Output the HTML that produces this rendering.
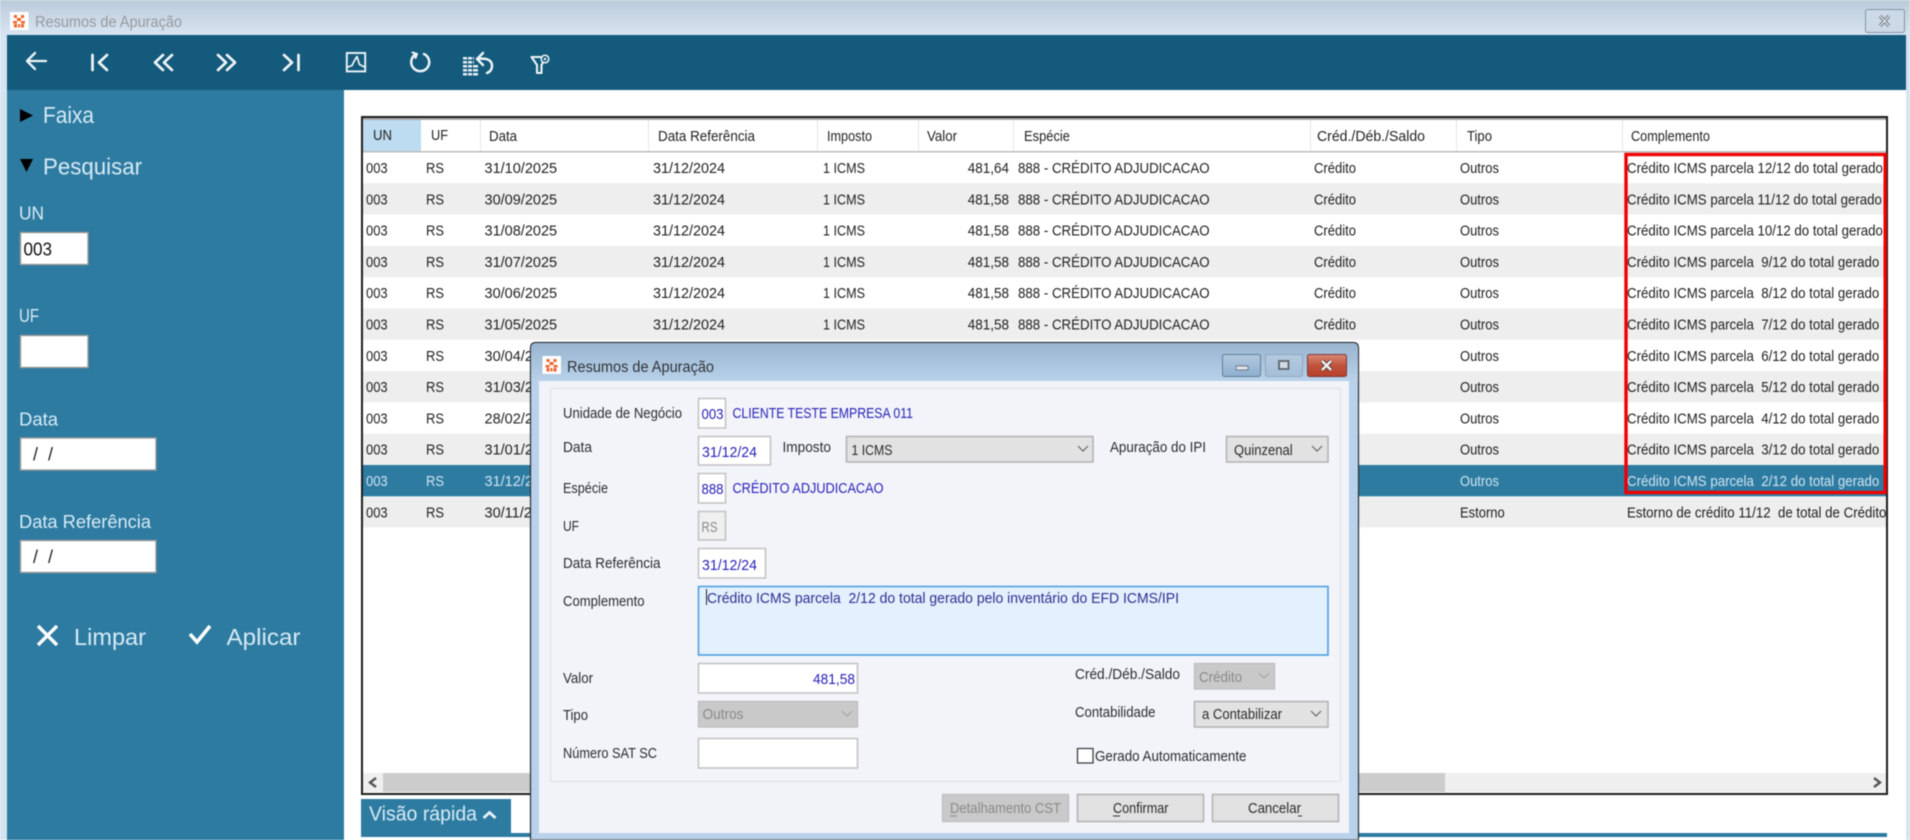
<!DOCTYPE html>
<html lang="pt-BR"><head><meta charset="utf-8"><title>Resumos de Apuração</title>
<style>
html,body{margin:0;padding:0;width:1910px;height:840px;overflow:hidden;background:#fff}
svg{display:block;filter:blur(.4px)}
text{font-family:"Liberation Sans",sans-serif;white-space:pre}
.g text{font-size:15px;fill:#222}
.g text.s{fill:#cfe4ef}
.h text{font-size:15px;fill:#222}
.sb text{fill:#d6ebf5}
.d text{font-size:15px;fill:#2c2c2c}
.d text.b{fill:#2a22b8}
.d text.m{fill:#8a8a8a}
.ic{fill:none;stroke:#eef4f7;stroke-linecap:round;stroke-linejoin:round}
.inp{fill:#fff;stroke:#c4c4c4;stroke-width:1.6}
.sel{fill:#e2e2e2;stroke:#b5b5b5;stroke-width:1.6}
.dis{fill:#c9c9c9;stroke:#c0c0c0;stroke-width:1.4}
.ch{fill:none;stroke:#666;stroke-width:1.2}
.btn{fill:#e1e1e1;stroke:#b4b4b4;stroke-width:1.6}
</style></head><body>
<svg width="1910" height="840" viewBox="0 0 1910 840" xmlns="http://www.w3.org/2000/svg">
<defs>
<linearGradient id="tb" x1="0" y1="0" x2="0" y2="1"><stop offset="0" stop-color="#bccbda"/><stop offset="1" stop-color="#d8e5f2"/></linearGradient>
<linearGradient id="dt" x1="0" y1="0" x2="0" y2="1"><stop offset="0" stop-color="#99b4cf"/><stop offset="1" stop-color="#b9d2ea"/></linearGradient>
<linearGradient id="bb" x1="0" y1="0" x2="0" y2="1"><stop offset="0" stop-color="#b3c9de"/><stop offset="1" stop-color="#8dafcf"/></linearGradient>
<linearGradient id="bm" x1="0" y1="0" x2="0" y2="1"><stop offset="0" stop-color="#b4cadf"/><stop offset="1" stop-color="#a5bfd9"/></linearGradient>
<linearGradient id="bx" x1="0" y1="0" x2="0" y2="1"><stop offset="0" stop-color="#d88a78"/><stop offset=".5" stop-color="#c1533c"/><stop offset="1" stop-color="#b8402a"/></linearGradient>
<clipPath id="gc"><rect x="363" y="118" width="1523" height="655"/></clipPath>
</defs>

<!-- outer window -->
<rect width="1910" height="840" fill="#d6e4f1"/>
<rect width="1910" height="36" fill="url(#tb)"/>
<rect x="10" y="12" width="18.5" height="18" fill="#fff"/>
<g fill="#f0642a"><rect x="14" y="15" width="3" height="3"/><rect x="21" y="15" width="3" height="3"/><rect x="17" y="18" width="4" height="3"/><rect x="13" y="21" width="4" height="2.5"/><rect x="21" y="21" width="4" height="2.5"/><rect x="14" y="24" width="3" height="3.5"/><rect x="18" y="24" width="2" height="3.5"/><rect x="21" y="24" width="3" height="3.5"/></g>
<text x="35" y="27" font-size="15.5" fill="#96999e" textLength="147" lengthAdjust="spacingAndGlyphs">Resumos de Apuração</text>
<rect x="1865.5" y="9.5" width="39" height="23" rx="2" fill="#ccd9e6" stroke="#8396a8"/>
<path d="M1880 16l9 10M1889 16l-9 10" stroke="#6b7680" stroke-width="3.2" fill="none"/>
<path d="M1880 16l9 10M1889 16l-9 10" stroke="#f2f5f8" stroke-width="1.2" fill="none"/>

<!-- toolbar -->
<rect x="7" y="35" width="1899" height="55" fill="#145a7c"/>
<g class="ic" style="stroke-width:2.7">
<path style="stroke-width:2.3" d="M27 61H46M35 53l-8 8 8 8"/>
<path d="M92.500 55V70M107 55l-8 7.500 8 7.500"/>
<path d="M163 55l-8 7.500 8 7.500M172 55l-8 7.500 8 7.500"/>
<path d="M218 55l8 7.500-8 7.500M227 55l8 7.500-8 7.500"/>
<path d="M284 55l8 7.500-8 7.500M298.500 55V70"/>
</g>
<g class="ic">
<rect x="346.800" y="53" width="18.400" height="18.400" style="stroke-width:1.900;stroke-linecap:butt;stroke-linejoin:miter"/>
<path d="M348 67l4-1.500 2.500-5 2.500-4 2.500 8 5 2.500" style="stroke-width:1.700"/>
<path d="M415.500 54.500A9 9 0 1 0 424 54" style="stroke-width:2.500"/>
<path d="M412.500 52.500l4.500 1.500-1.500 4" style="stroke-width:2"/>
<path d="M477 59Q492 57 492 66Q492 71 487 73M483 53l-6 6 6 6" style="stroke-width:2.500"/>
<path d="M531.500 57H546L541.500 65V73H537V65Z" style="stroke-width:2.100"/>
<circle cx="545" cy="59" r="3.800" style="stroke-width:1.500;fill:#145a7c"/>
</g>
<g fill="#e6eef3"><rect x="463" y="57" width="11" height="2.500"/><rect x="463" y="61" width="11" height="2.500"/><rect x="463" y="65" width="15" height="2.500"/><rect x="463" y="69" width="15" height="2.500"/><rect x="463" y="73" width="15" height="2.500"/></g>
<g fill="#145a7c"><rect x="467" y="56" width="1" height="20"/><rect x="472" y="56" width="1" height="20"/></g>
<circle cx="545" cy="59" r="1.300" fill="#e6eef3"/>

<!-- sidebar -->
<rect x="7" y="90" width="337" height="750" fill="#2e7ba2"/>
<path d="M20 109L33 115.500 20 122Z" fill="#000"/>
<path d="M20 159H33L26.500 172Z" fill="#000"/>
<g class="sb">
<text x="43" y="123" font-size="23" textLength="51" lengthAdjust="spacingAndGlyphs">Faixa</text>
<text x="43" y="174.500" font-size="23" textLength="99" lengthAdjust="spacingAndGlyphs">Pesquisar</text>
<text x="19" y="219.700" font-size="18.500" textLength="25" lengthAdjust="spacingAndGlyphs">UN</text>
<text x="19" y="322" font-size="18.500" textLength="20" lengthAdjust="spacingAndGlyphs">UF</text>
<text x="19" y="425.700" font-size="18.500" textLength="39" lengthAdjust="spacingAndGlyphs">Data</text>
<text x="19" y="528" font-size="18.500" textLength="132" lengthAdjust="spacingAndGlyphs">Data Referência</text>
<text x="74" y="645" font-size="23" textLength="72" lengthAdjust="spacingAndGlyphs">Limpar</text>
<text x="226.500" y="645" font-size="23" textLength="74" lengthAdjust="spacingAndGlyphs">Aplicar</text>
</g>
<g fill="#fff" stroke="#9a9a9a" stroke-width="1.400">
<rect x="20.500" y="232.500" width="67.500" height="32"/>
<rect x="20.500" y="335.500" width="67.500" height="32"/>
<rect x="20.500" y="438" width="135.500" height="32"/>
<rect x="20.500" y="540.500" width="135.500" height="32"/>
</g>
<text x="23.500" y="255.500" font-size="18.500" fill="#111" textLength="28.500" lengthAdjust="spacingAndGlyphs">003</text>
<text x="33" y="460.500" font-size="18" fill="#222">/  /</text>
<text x="33" y="563" font-size="18" fill="#222">/  /</text>
<path d="M38 626L57 645M57 626L38 645" stroke="#fff" stroke-width="3.400" fill="none"/>
<path d="M190 634L197 642 210 626" stroke="#fff" stroke-width="3.600" fill="none"/>

<!-- content -->
<rect x="344" y="90" width="1562" height="750" fill="#fff"/>

<!-- grid -->
<rect x="362" y="117" width="1525" height="677" fill="#fff" stroke="#1c1c1c" stroke-width="2"/>
<rect x="363" y="118" width="1523" height="2" fill="#aaa"/>
<rect x="363" y="120" width="58" height="31" fill="#bddcf1"/>
<rect x="363" y="151" width="1523" height="1.500" fill="#bdbdbd"/>
<g fill="#e6e6e6"><rect x="480" y="120" width="1" height="31"/><rect x="648" y="120" width="1" height="31"/><rect x="817" y="120" width="1" height="31"/><rect x="918" y="120" width="1" height="31"/><rect x="1013" y="120" width="1" height="31"/><rect x="1310" y="120" width="1" height="31"/><rect x="1456" y="120" width="1" height="31"/><rect x="1622" y="120" width="1" height="31"/></g>
<g fill="#eeeeee"><rect x="363" y="183.300" width="1523" height="31.300"/><rect x="363" y="245.900" width="1523" height="31.300"/><rect x="363" y="308.500" width="1523" height="31.300"/><rect x="363" y="371.100" width="1523" height="31.300"/><rect x="363" y="433.700" width="1523" height="31.300"/><rect x="363" y="496.300" width="1523" height="31"/></g>
<rect x="363" y="465" width="1523" height="31.300" fill="#2e7ba2"/>

<g class="h">
<text x="373" y="140" textLength="19" lengthAdjust="spacingAndGlyphs">UN</text>
<text x="431" y="140" textLength="17" lengthAdjust="spacingAndGlyphs">UF</text>
<text x="489" y="141" textLength="28" lengthAdjust="spacingAndGlyphs">Data</text>
<text x="658" y="141" textLength="97" lengthAdjust="spacingAndGlyphs">Data Referência</text>
<text x="827" y="141" textLength="45" lengthAdjust="spacingAndGlyphs">Imposto</text>
<text x="927" y="141" textLength="30" lengthAdjust="spacingAndGlyphs">Valor</text>
<text x="1024" y="141" textLength="46" lengthAdjust="spacingAndGlyphs">Espécie</text>
<text x="1317" y="141" textLength="108" lengthAdjust="spacingAndGlyphs">Créd./Déb./Saldo</text>
<text x="1467" y="141" textLength="25" lengthAdjust="spacingAndGlyphs">Tipo</text>
<text x="1631" y="141" textLength="79" lengthAdjust="spacingAndGlyphs">Complemento</text>
</g>

<g class="g" clip-path="url(#gc)">
<g transform="translate(366 0) scale(.864 1)">
<text y="173">003</text><text y="204.300">003</text><text y="235.600">003</text><text y="266.900">003</text><text y="298.200">003</text><text y="329.500">003</text><text y="360.800">003</text><text y="392.100">003</text><text y="423.400">003</text><text y="454.700">003</text><text y="486" class="s">003</text><text y="517.300">003</text>
</g>
<g transform="translate(426 0) scale(.865 1)">
<text y="173">RS</text><text y="204.300">RS</text><text y="235.600">RS</text><text y="266.900">RS</text><text y="298.200">RS</text><text y="329.500">RS</text><text y="360.800">RS</text><text y="392.100">RS</text><text y="423.400">RS</text><text y="454.700">RS</text><text y="486" class="s">RS</text><text y="517.300">RS</text>
</g>
<g transform="translate(484.500 0) scale(.968 1)">
<text y="173">31/10/2025</text><text y="204.300">30/09/2025</text><text y="235.600">31/08/2025</text><text y="266.900">31/07/2025</text><text y="298.200">30/06/2025</text><text y="329.500">31/05/2025</text><text y="360.800">30/04/2025</text><text y="392.100">31/03/2025</text><text y="423.400">28/02/2025</text><text y="454.700">31/01/2025</text><text y="486" class="s">31/12/2024</text><text y="517.300">30/11/2024</text>
</g>
<g transform="translate(653 0) scale(.96 1)">
<text y="173">31/12/2024</text><text y="204.300">31/12/2024</text><text y="235.600">31/12/2024</text><text y="266.900">31/12/2024</text><text y="298.200">31/12/2024</text><text y="329.500">31/12/2024</text>
</g>
<g transform="translate(823 0) scale(.84 1)">
<text y="173">1 ICMS</text><text y="204.300">1 ICMS</text><text y="235.600">1 ICMS</text><text y="266.900">1 ICMS</text><text y="298.200">1 ICMS</text><text y="329.500">1 ICMS</text>
</g>
<g transform="translate(1009 0) scale(.9 1)" text-anchor="end">
<text y="173">481,64</text><text y="204.300">481,58</text><text y="235.600">481,58</text><text y="266.900">481,58</text><text y="298.200">481,58</text><text y="329.500">481,58</text>
</g>
<g transform="translate(1018 0) scale(.886 1)">
<text y="173">888 - CRÉDITO ADJUDICACAO</text><text y="204.300">888 - CRÉDITO ADJUDICACAO</text><text y="235.600">888 - CRÉDITO ADJUDICACAO</text><text y="266.900">888 - CRÉDITO ADJUDICACAO</text><text y="298.200">888 - CRÉDITO ADJUDICACAO</text><text y="329.500">888 - CRÉDITO ADJUDICACAO</text>
</g>
<g transform="translate(1314 0) scale(.87 1)">
<text y="173">Crédito</text><text y="204.300">Crédito</text><text y="235.600">Crédito</text><text y="266.900">Crédito</text><text y="298.200">Crédito</text><text y="329.500">Crédito</text>
</g>
<g transform="translate(1460 0) scale(.866 1)">
<text y="173">Outros</text><text y="204.300">Outros</text><text y="235.600">Outros</text><text y="266.900">Outros</text><text y="298.200">Outros</text><text y="329.500">Outros</text><text y="360.800">Outros</text><text y="392.100">Outros</text><text y="423.400">Outros</text><text y="454.700">Outros</text><text y="486" class="s">Outros</text><text y="517.300">Estorno</text>
</g>
<g transform="translate(1627 0) scale(.885 1)">
<text y="173">Crédito ICMS parcela 12/12 do total gerado</text><text y="204.300">Crédito ICMS parcela 11/12 do total gerado</text><text y="235.600">Crédito ICMS parcela 10/12 do total gerado</text><text y="266.900">Crédito ICMS parcela  9/12 do total gerado</text><text y="298.200">Crédito ICMS parcela  8/12 do total gerado</text><text y="329.500">Crédito ICMS parcela  7/12 do total gerado</text><text y="360.800">Crédito ICMS parcela  6/12 do total gerado</text><text y="392.100">Crédito ICMS parcela  5/12 do total gerado</text><text y="423.400">Crédito ICMS parcela  4/12 do total gerado</text><text y="454.700">Crédito ICMS parcela  3/12 do total gerado</text><text y="486" class="s">Crédito ICMS parcela  2/12 do total gerado</text><text y="517.300">Estorno de crédito 11/12  de total de Crédito gerado</text>
</g>
</g>

<!-- red highlight -->
<rect x="1626" y="154.500" width="259.200" height="338" fill="none" stroke="#f00000" stroke-width="3.400"/>

<!-- scrollbar -->
<rect x="363" y="773" width="1523" height="19" fill="#efefef"/>
<rect x="383" y="773" width="1062" height="19" fill="#cccccc"/>
<path d="M376 778l-6 4.500 6 4.500" fill="none" stroke="#555" stroke-width="2.400"/>
<path d="M1874 778l6 4.500-6 4.500" fill="none" stroke="#555" stroke-width="2.400"/>

<!-- visão rápida -->
<rect x="361" y="799" width="150" height="37" fill="#2e7ba2"/>
<rect x="361" y="833" width="1526" height="4" fill="#2e7ba2"/>
<text x="369" y="820.700" font-size="20" fill="#d6ebf5" textLength="108" lengthAdjust="spacingAndGlyphs">Visão rápida</text>
<path d="M483.500 818L489.500 812.500 495.500 818" fill="none" stroke="#eaf4f8" stroke-width="2.800"/>

<!-- dialog -->
<g class="d">
<path d="M530.500 840V348Q530.500 342.500 536 342.500H1353Q1358.500 342.500 1358.500 348V840Z" fill="#b9d1ea" stroke="#2a2f33" stroke-width="1.200"/>
<path d="M531 381V348Q531 343 536 343H1353Q1358 343 1358 348V381Z" fill="url(#dt)"/>
<rect x="539" y="381" width="810" height="452" fill="#f1f3f9"/>
<rect x="550.500" y="388.500" width="790" height="393" fill="#f2f4fa" stroke="#e2e4e8" stroke-width="1.400"/>

<rect x="542.500" y="356" width="18.500" height="18" fill="#fff"/>
<g fill="#f0642a"><rect x="546.500" y="359" width="3" height="3"/><rect x="553.500" y="359" width="3" height="3"/><rect x="549.500" y="362" width="4" height="3"/><rect x="545.500" y="365" width="4" height="2.500"/><rect x="553.500" y="365" width="4" height="2.500"/><rect x="546.500" y="368" width="3" height="3.500"/><rect x="550.500" y="368" width="2" height="3.500"/><rect x="553.500" y="368" width="3" height="3.500"/></g>
<text x="567" y="372" style="font-size:15.500px;fill:#2f3338" textLength="147" lengthAdjust="spacingAndGlyphs">Resumos de Apuração</text>

<rect x="1222.500" y="354.500" width="38" height="22" rx="2" fill="url(#bb)" stroke="#5f7d98"/>
<rect x="1236" y="366" width="12" height="4" fill="#dfe4e8" stroke="#5a6670" stroke-width=".8"/>
<rect x="1265.500" y="354.500" width="37" height="22" rx="2" fill="url(#bm)" stroke="#8fa9c0"/>
<rect x="1279" y="361" width="9.500" height="8" fill="#d5dbe0" stroke="#5a6670" stroke-width="1.800"/>
<rect x="1307.500" y="354.500" width="39" height="22" rx="2" fill="url(#bx)" stroke="#7b3a3a"/>
<path d="M1322 361l9 9M1331 361l-9 9" stroke="#4c3a3a" stroke-width="4.400" fill="none"/>
<path d="M1322 361l9 9M1331 361l-9 9" stroke="#f0f0f0" stroke-width="2.600" fill="none"/>

<rect class="inp" x="698.500" y="398.500" width="27" height="29.500"/>
<rect class="inp" x="698.500" y="436.500" width="72" height="28.500"/>
<rect class="sel" x="846.500" y="436.500" width="246.500" height="25.500"/>
<rect class="sel" x="1226.500" y="436.500" width="101.500" height="25.500"/>
<rect class="inp" x="698.500" y="473.500" width="27" height="29.500"/>
<rect x="698.500" y="511.500" width="27" height="28.500" fill="#f0f0f0" stroke="#c4c4c4" stroke-width="1.600"/>
<rect class="inp" x="698.500" y="548.500" width="67" height="29.500"/>
<rect x="698.500" y="586.500" width="629.500" height="68.500" fill="#e3f0fd" stroke="#4fa0df" stroke-width="1.600"/>
<rect class="inp" x="698.500" y="663.500" width="159" height="29.500"/>
<rect class="dis" x="698.500" y="701.500" width="159" height="25.500"/>
<rect class="inp" x="698.500" y="738.500" width="159" height="29.500"/>
<rect class="dis" x="1194.500" y="663.500" width="80" height="25.500"/>
<rect class="sel" x="1194.500" y="701.500" width="133.500" height="25.500"/>
<rect x="1077.500" y="748.500" width="15.500" height="14.500" fill="#fff" stroke="#333" stroke-width="1.200"/>

<path class="ch" d="M1078 446l5 5 5-5"/>
<path class="ch" d="M1312 446l5 5 5-5"/>
<path class="ch" style="stroke:#a5a5a5" d="M842 711l5 5 5-5"/>
<path class="ch" style="stroke:#a5a5a5" d="M1259 673l5 5 5-5"/>
<path class="ch" d="M1311 711l5 5 5-5"/>

<text x="563" y="418" textLength="119" lengthAdjust="spacingAndGlyphs">Unidade de Negócio</text>
<text x="701.500" y="419" class="b" textLength="22" lengthAdjust="spacingAndGlyphs">003</text>
<text x="732.500" y="418" class="b" textLength="180.500" lengthAdjust="spacingAndGlyphs">CLIENTE TESTE EMPRESA 011</text>
<text x="563" y="452" textLength="29" lengthAdjust="spacingAndGlyphs">Data</text>
<text x="702" y="457" class="b" textLength="55" lengthAdjust="spacingAndGlyphs">31/12/24</text>
<text x="782.500" y="452" textLength="48.500" lengthAdjust="spacingAndGlyphs">Imposto</text>
<text x="851.500" y="455" textLength="41" lengthAdjust="spacingAndGlyphs">1 ICMS</text>
<text x="1110" y="452" textLength="96" lengthAdjust="spacingAndGlyphs">Apuração do IPI</text>
<text x="1234" y="455" textLength="58.700" lengthAdjust="spacingAndGlyphs">Quinzenal</text>
<text x="563" y="493" textLength="45" lengthAdjust="spacingAndGlyphs">Espécie</text>
<text x="701.500" y="494" class="b" textLength="22" lengthAdjust="spacingAndGlyphs">888</text>
<text x="732.500" y="493" class="b" textLength="151" lengthAdjust="spacingAndGlyphs">CRÉDITO ADJUDICACAO</text>
<text x="563" y="531" textLength="16" lengthAdjust="spacingAndGlyphs">UF</text>
<text x="701.500" y="532" class="m" textLength="16" lengthAdjust="spacingAndGlyphs">RS</text>
<text x="563" y="568" textLength="97.500" lengthAdjust="spacingAndGlyphs">Data Referência</text>
<text x="702" y="570" class="b" textLength="55" lengthAdjust="spacingAndGlyphs">31/12/24</text>
<text x="563" y="606" textLength="81.500" lengthAdjust="spacingAndGlyphs">Complemento</text>
<text x="707" y="603" class="b" style="fill:#2f2f8f" textLength="472" lengthAdjust="spacingAndGlyphs">Crédito ICMS parcela  2/12 do total gerado pelo inventário do EFD ICMS/IPI</text>
<rect x="706" y="589" width="1" height="16" fill="#222"/>
<text x="563" y="683" textLength="30" lengthAdjust="spacingAndGlyphs">Valor</text>
<text x="813" y="684" class="b" textLength="42" lengthAdjust="spacingAndGlyphs">481,58</text>
<text x="563" y="720" textLength="25" lengthAdjust="spacingAndGlyphs">Tipo</text>
<text x="702.500" y="719" class="m" textLength="41" lengthAdjust="spacingAndGlyphs">Outros</text>
<text x="563" y="758" textLength="94" lengthAdjust="spacingAndGlyphs">Número SAT SC</text>
<text x="1075" y="679" textLength="105" lengthAdjust="spacingAndGlyphs">Créd./Déb./Saldo</text>
<text x="1199" y="682" class="m" textLength="43" lengthAdjust="spacingAndGlyphs">Crédito</text>
<text x="1075" y="717" textLength="80.500" lengthAdjust="spacingAndGlyphs">Contabilidade</text>
<text x="1202" y="719" textLength="80" lengthAdjust="spacingAndGlyphs">a Contabilizar</text>
<text x="1095" y="761" textLength="151.500" lengthAdjust="spacingAndGlyphs">Gerado Automaticamente</text>

<rect class="dis" x="942.500" y="794.500" width="126" height="27"/>
<rect class="btn" x="1077.500" y="794.500" width="126" height="27"/>
<rect class="btn" x="1212.500" y="794.500" width="126" height="27"/>
<text x="950" y="813" class="m" textLength="111" lengthAdjust="spacingAndGlyphs">Detalhamento CST</text>
<text x="1113" y="813" textLength="55.500" lengthAdjust="spacingAndGlyphs">Confirmar</text>
<text x="1248" y="813" textLength="53" lengthAdjust="spacingAndGlyphs">Cancelar</text>
<rect x="950" y="815.500" width="7" height="1" fill="#8a8a8a"/>
<rect x="1113" y="815.500" width="7" height="1" fill="#333"/>
<rect x="1298" y="815.500" width="4" height="1" fill="#333"/>
</g>
</svg>
</body></html>
